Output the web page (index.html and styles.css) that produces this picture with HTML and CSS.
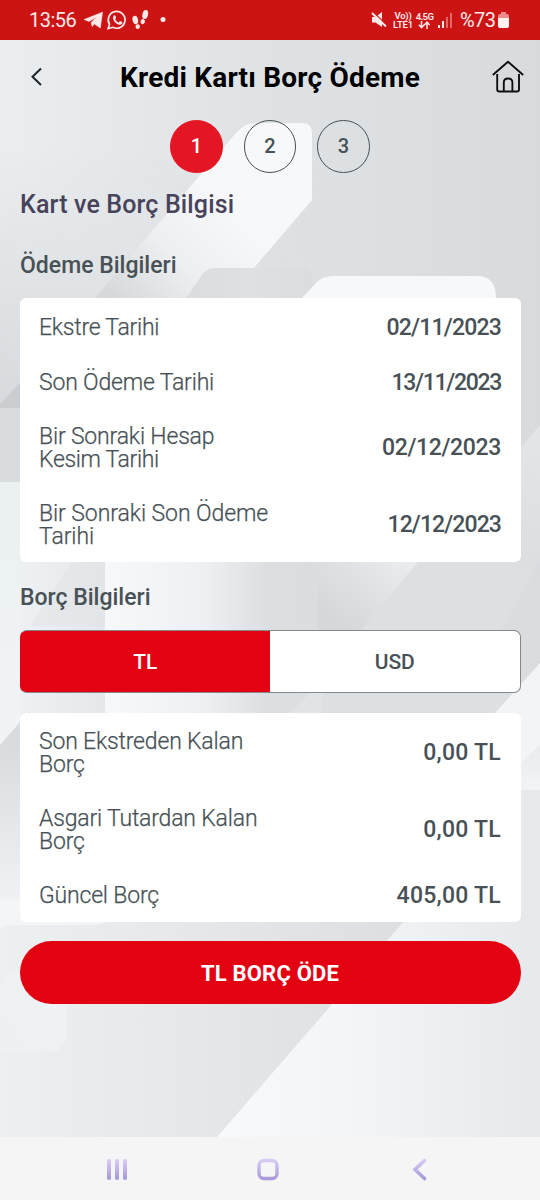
FILE: index.html
```
<!DOCTYPE html>
<html lang="tr">
<head>
<meta charset="utf-8">
<meta name="viewport" content="width=device-width">
<title>Kredi Kartı Borç Ödeme</title>
<link rel="stylesheet" href="styles.css">
</head>
<body>
<div class="screen">
  <svg class="backdrop" viewBox="0 0 540 1200" aria-hidden="true">
    <defs>
      <linearGradient id="base" x1="0" y1="0" x2="1" y2="0"><stop offset="0" stop-color="#ebeef0"/><stop offset=".5" stop-color="#dfe2e4"/><stop offset="1" stop-color="#d8dbde"/></linearGradient>
      <linearGradient id="shade" x1="0" y1="0" x2="1" y2="0"><stop offset="0" stop-color="#d6d9dc"/><stop offset=".6" stop-color="#d6d9dc" stop-opacity="0"/></linearGradient>
      <linearGradient id="fade" x1="0" y1="0" x2="0" y2="1"><stop offset="0" stop-color="#000"/><stop offset="1" stop-color="#fff"/></linearGradient>
      <mask id="lower"><rect y="150" width="540" height="258" fill="url(#fade)"/></mask>
      <linearGradient id="beam" gradientUnits="userSpaceOnUse" x1="225" y1="200" x2="120" y2="305"><stop offset="0" stop-color="#f7f8fa"/><stop offset=".5" stop-color="#edeff1"/><stop offset="1" stop-color="#d6d9db"/></linearGradient>
      <linearGradient id="plate" x1="0" y1="0" x2="1" y2="0"><stop offset="0" stop-color="#dadcdf"/><stop offset=".5" stop-color="#dfe0e3"/><stop offset="1" stop-color="#dadde0"/></linearGradient>
      <linearGradient id="pillar" gradientUnits="userSpaceOnUse" x1="105" y1="0" x2="322" y2="0"><stop offset="0" stop-color="#f7f8fa"/><stop offset=".45" stop-color="#edf1f3"/><stop offset=".75" stop-color="#dcdfe2"/><stop offset="1" stop-color="#dadde0"/></linearGradient>
      <linearGradient id="fold" gradientUnits="userSpaceOnUse" x1="385" y1="545" x2="325" y2="610"><stop offset="0" stop-color="#e9ebed"/><stop offset="1" stop-color="#d5d8da"/></linearGradient>
      <linearGradient id="side" gradientUnits="userSpaceOnUse" x1="0" y1="745" x2="0" y2="920"><stop offset="0" stop-color="#d9dcde"/><stop offset=".5" stop-color="#e6e9ec"/><stop offset="1" stop-color="#f2f4f6"/></linearGradient>
      <linearGradient id="left" gradientUnits="userSpaceOnUse" x1="0" y1="482" x2="0" y2="740"><stop offset="0" stop-color="#ebf0f0"/><stop offset="1" stop-color="#f1f4f7"/></linearGradient>
      <linearGradient id="haze" x1="0" y1="0" x2="1" y2="0"><stop offset="0" stop-color="#eef1f3"/><stop offset="1" stop-color="#e5e8eb"/></linearGradient>
      <linearGradient id="edge" gradientUnits="userSpaceOnUse" x1="0" y1="430" x2="0" y2="590"><stop offset="0" stop-color="#e3e6e9"/><stop offset="1" stop-color="#dadde0"/></linearGradient>
      <linearGradient id="floor" x1="0" y1="0" x2="1" y2="0"><stop offset="0" stop-color="#edf0f1"/><stop offset=".7" stop-color="#e1e3e5"/><stop offset="1" stop-color="#dcdee0"/></linearGradient>
      <linearGradient id="wedge" gradientUnits="userSpaceOnUse" x1="217" y1="0" x2="540" y2="0"><stop offset="0" stop-color="#f8f9fb"/><stop offset=".5" stop-color="#f1f4f6"/><stop offset="1" stop-color="#e6e9eb"/></linearGradient>
      <linearGradient id="right" gradientUnits="userSpaceOnUse" x1="0" y1="750" x2="0" y2="790"><stop offset="0" stop-color="#e9ecef"/><stop offset="1" stop-color="#f2f4f6"/></linearGradient>
      <linearGradient id="chip" gradientUnits="userSpaceOnUse" x1="0" y1="1030" x2="67" y2="985"><stop offset="0" stop-color="#edf1f1"/><stop offset="1" stop-color="#f0f2f6"/></linearGradient>
    </defs>
    <rect width="540" height="1200" fill="url(#base)"/>
    <rect y="150" width="540" height="258" fill="url(#shade)" mask="url(#lower)"/>
    <path d="M237 132Q245 123 255 123H303Q312 123 312 134V200L253 269V300H93Z" fill="url(#beam)"/>
    <path d="M186 298L202 275Q207 268 215 268H300Q312 268 312 281V310H186Z" fill="url(#plate)"/>
    <path d="M302 298L316 283Q322 276 334 276H477Q496 276 496 298V310H302Z" fill="#f7f8fa"/>
    <path d="M0 404L30 372V408H0Z" fill="#cbced0"/>
    <path d="M0 408H30V482H0Z" fill="#d9dcdf"/>
    <path d="M0 482H30V560H110V722H20L0 745Z" fill="url(#left)"/>
    <path d="M20 560H106V722H20V640Z" fill="url(#haze)"/>
    <path d="M72 562H106V626H30Z" fill="#dfe2e5" opacity=".45"/>
    <path d="M540 425L500 472V600H540Z" fill="url(#edge)"/>
    <path d="M105 562H322V720H112Q105 718 105 708Z" fill="url(#pillar)"/>
    <path d="M318 562H420L360 632H318Z" fill="url(#fold)"/>
    <path d="M418 562H520L540 578V720H288L310 692Z" fill="#dce0e2"/>
    <path d="M540 562V690H500V632Z" fill="#d7dadd" opacity=".6"/>
    <path d="M310 692H322V715H288Z" fill="#e1e4e7"/>
    <path d="M0 745L30 711V925H0Z" fill="url(#side)"/>
    <path d="M540 663L495 713V790H540Z" fill="#f2f4f7"/>
    <path d="M540 744L500 785V790H540Z" fill="url(#right)"/>
    <path d="M500 790H540V925H500Z" fill="#e6e9ec"/>
    <rect y="920" width="420" height="217" fill="url(#floor)"/>
    <path d="M0 900H110V918Q106 925 93 925H14Q5 925 0 930Z" fill="#f3f5f7"/>
    <path d="M405 920H540V1137H217Z" fill="url(#wedge)"/>
    <path d="M0 985Q8 972 20 972H67V1039L57 1052H0Z" fill="url(#chip)"/>
  </svg>

  <header class="status">
    <span class="clock">13:56</span>
    <svg class="apps" viewBox="0 0 84 24" fill="#ffe9e9">
      <path d="M0 11.600L18.500 4.200 16.300 20 10.200 15.800 8.300 18.600 7.200 14.600 12.700 8.900 5.100 13.400Z" stroke="#ffe9e9" stroke-width=".6"/>
      <path d="M24.200 20.600L25.500 16.200A8.400 8.400 0 1 1 28.900 19.300Z" fill="none" stroke="#ffe9e9" stroke-width="1.700"/>
      <path d="M29.700 7.700c.9-.8 1.500-.5 1.800.4l.7 1.600-1 1.500c.8 1.600 1.900 2.500 3.500 3.200l1.300-1.400 2.200 1.100c.7.500-.3 2.300-1.700 2.600-4.600.5-9.100-5.500-6.800-9Z"/>
      <ellipse cx="51.300" cy="12" rx="2.700" ry="4.200" transform="rotate(-15 51.300 12)"/>
      <ellipse cx="53.700" cy="18.700" rx="2.200" ry="2.400"/>
      <ellipse cx="61.200" cy="6.500" rx="2.800" ry="4.600" transform="rotate(12 61.200 6.500)"/>
      <ellipse cx="58.800" cy="13.600" rx="2.200" ry="2.500" transform="rotate(20 58.800 13.600)"/>
      <circle cx="79" cy="11.600" r="2.500"/>
    </svg>
    <div class="system">
      <svg class="mute" viewBox="0 0 16 16"><path d="M1 5H4.500L11 0V15L4.500 10.500H1Z" fill="#ffe9e9"/><path d="M2.500 0L16 13.500" stroke="#cc1414" stroke-width="1.200"/><path d="M1 1L15 14.500" stroke="#ffe9e9" stroke-width="2"/></svg>
      <span class="net volte"><b>Vo))</b><b>LTE1</b></span>
      <span class="net speed"><b>4.5G</b><svg viewBox="0 0 13 8"><path d="M3.500 0V6M.8 3.800L3.500 6.700 6.200 3.800M9 8V1.500M6.300 4L9 1.200 11.700 4" fill="none" stroke="#ffe9e9" stroke-width="1.500"/></svg></span>
      <svg class="signal" viewBox="0 0 15 15" fill="#ffe9e9"><path d="M0 12H2V15H0ZM4 8H6V15H4Z"/><path d="M8 4H10V15H8ZM12 0H14V15H12Z" opacity=".4"/></svg>
      <span class="percent">%73</span>
      <svg class="battery" viewBox="0 0 11 16"><path d="M3 0H8V2H9Q11 2 11 4V6H0V4Q0 2 2 2H3Z" fill="#ee8b8b"/><path d="M0 6H11V14Q11 16 9 16H2Q0 16 0 14Z" fill="#ffefef"/></svg>
    </div>
  </header>

  <div class="titlebar">
    <svg class="back" viewBox="0 0 12 20"><path d="M10 1.500L1.500 9.800 10 18" fill="none" stroke="#20252a" stroke-width="2"/></svg>
    <h1>Kredi Kartı Borç Ödeme</h1>
    <svg class="home" viewBox="0 0 32 34" fill="none" stroke="#101010" stroke-width="1.900" stroke-linejoin="round"><path d="M.8 15L16 1.800 31.200 15M5.200 14V29.500Q5.200 31.500 7.200 31.500H25Q27 31.500 27 29.500V14M11.800 31V22.500Q11.800 18.500 16.100 18.500T20.400 22.500V31"/></svg>
  </div>

  <main>
    <ol class="steps"><li class="active">1</li><li>2</li><li>3</li></ol>
    <h2>Kart ve Borç Bilgisi</h2>
    <h3 class="payment">Ödeme Bilgileri</h3>
    <dl class="card">
      <div class="row"><dt class="snug">Ekstre Tarihi</dt><dd class="elevens">02/11/2023</dd></div>
      <div class="row"><dt>Son Ödeme Tarihi</dt><dd class="thirteen">13/11/2023</dd></div>
      <div class="row double"><dt>Bir Sonraki Hesap<br><span class="kesim">Kesim Tarihi</span></dt><dd>02/12/2023</dd></div>
      <div class="row double"><dt class="loose">Bir Sonraki Son Ödeme<br>Tarihi</dt><dd class="twelves">12/12/2023</dd></div>
    </dl>
    <h3 class="debt">Borç Bilgileri</h3>
    <div class="tabs"><button class="selected">TL</button><button>USD</button></div>
    <dl class="card">
      <div class="row double"><dt>Son Ekstreden Kalan<br>Borç</dt><dd class="amount">0,00 TL</dd></div>
      <div class="row double"><dt>Asgari Tutardan Kalan<br>Borç</dt><dd class="amount">0,00 TL</dd></div>
      <div class="row last"><dt>Güncel Borç</dt><dd class="amount">405,00 TL</dd></div>
    </dl>
    <button class="pay">TL BORÇ ÖDE</button>
  </main>

  <nav class="navbar">
    <svg viewBox="0 0 384 24" fill="none" stroke="url(#lilac)" stroke-linecap="round">
      <defs><linearGradient id="lilac" gradientUnits="userSpaceOnUse" x1="0" y1="1" x2="0" y2="22"><stop offset="0" stop-color="#dacdf3"/><stop offset="1" stop-color="#a797d8"/></linearGradient></defs>
      <g fill="url(#lilac)" stroke="none"><rect x="29" y="1" width="4" height="21" rx="1.800"/><rect x="37" y="1" width="4" height="21" rx="1.800"/><rect x="45" y="1" width="4" height="21" rx="1.800"/></g>
      <rect x="181" y="2.500" width="18" height="18" rx="5" stroke-width="3.400"/>
      <path d="M346.500 2.500L337 11.500 346.500 20.500" stroke-width="3.600"/>
    </svg>
  </nav>
</div>
</body>
</html>
```
FILE: styles.css
```
* { box-sizing: border-box; }
body { margin: 0; font-family: Roboto, "Noto Sans", sans-serif; color: #475156; }
h1, h2, h3, ol, dl, dd { margin: 0; padding: 0; }
button { font-family: inherit; border: 0; padding: 0; }
svg { display: block; flex: none; }

.screen { position: relative; width: 540px; height: 1200px; overflow: hidden; display: flex; flex-direction: column; }
.backdrop { position: absolute; inset: 0; width: 540px; height: 1200px; z-index: -1; }

.status { height: 40px; flex: none; background: #cc1414; color: #ffe9e9; display: flex; align-items: center; padding: 0 31px 0 29px; }
.clock { font-size: 20px; width: 55px; letter-spacing: -.5px; line-height: 24px; }
.apps { width: 84px; height: 24px; }
.system { margin-left: auto; display: flex; align-items: center; }
.mute { width: 16px; height: 16px; margin-right: 6px; }
.net { display: flex; flex-direction: column; align-items: center; font-size: 9.500px; line-height: 9px; }
.net b { font-weight: 600; display: block; height: 9px; }
.volte { width: 20px; margin-right: 3px; letter-spacing: -.2px; }
.speed { width: 17px; margin-right: 5px; letter-spacing: -.6px; }
.speed svg { width: 13px; height: 8px; }
.signal { width: 15px; height: 15px; margin-right: 7px; }
.percent { font-size: 20px; line-height: 24px; width: 38px; letter-spacing: -.6px; white-space: nowrap; }
.battery { width: 11px; height: 16px; }

.titlebar { height: 80px; flex: none; padding: 0 16px 6px 31px; display: flex; align-items: center; justify-content: space-between; color: #000; }
.back { width: 12px; height: 20px; }
h1 { font-size: 28px; font-weight: 700; letter-spacing: .2px; line-height: 34px; margin: 1px 0 0 5px; white-space: nowrap; }
.home { width: 32px; height: 34px; }

main { padding: 0 20px; display: flex; flex-direction: column; height: 1017px; flex: none; }
.steps { display: flex; justify-content: center; gap: 21px; list-style: none; }
.steps li { width: 52.500px; height: 52.500px; border-radius: 50%; border: 1.500px solid #475156; display: flex; align-items: center; justify-content: center; font-size: 20px; font-weight: 500; }
.steps .active { background: #e51624; border-color: #e51624; color: #fff; }
h2 { font-size: 25px; font-weight: 500; line-height: 30px; margin-top: 17px; letter-spacing: .15px; color: #47435a; }
h3 { font-size: 23px; font-weight: 500; line-height: 28px; }
.payment { margin: 32.500px 0 18px; }
.debt { margin: 21.500px 0 18.500px; }

.card { background: #fff; border-radius: 6px; padding: 0 19.500px; flex: none; margin-right: -.5px; margin-left: -.5px; }
.row { display: flex; justify-content: space-between; align-items: center; height: 55px; padding-top: 3px; }
.row.double { height: 77px; padding: 2px 0 0; }
.row.last { padding-top: 2px; }
dt { font-size: 23px; font-weight: 300; line-height: 23px; letter-spacing: -.18px; -webkit-text-stroke: .25px #475156; }
.snug { letter-spacing: -.25px; }
.kesim { letter-spacing: -.35px; }
.loose { letter-spacing: -.08px; }
dd { font-size: 23px; font-weight: 500; letter-spacing: -.35px; white-space: nowrap; }
.elevens { letter-spacing: -.8px; }
.thirteen { letter-spacing: -1.300px; }
.twelves { letter-spacing: -.9px; }
.amount { letter-spacing: .25px; }

.tabs { display: flex; height: 63px; border-radius: 7px; border: 1.500px solid #84888b; border-left-color: #e30212; overflow: hidden; background: linear-gradient(90deg, #e30212 50%, #fff 50%); margin: 0 -.5px 20px; flex: none; }
.tabs button { flex: 1; font-size: 21px; font-weight: 500; color: #475156; background: none; padding-top: 1px; }
.tabs .selected { color: #fff; margin: -1.500px 0; background: #e30212; }
.pay { height: 63px; border-radius: 32px; margin: 19px -.5px 0; background: #e30212; color: #fff; font-size: 22px; font-weight: 700; letter-spacing: .2px; flex: none; padding-top: 1px; }

.navbar { height: 63px; flex: none; background: #f5f5f5; display: flex; justify-content: center; padding-top: 21px; }
.navbar svg { width: 384px; height: 24px; }
```
